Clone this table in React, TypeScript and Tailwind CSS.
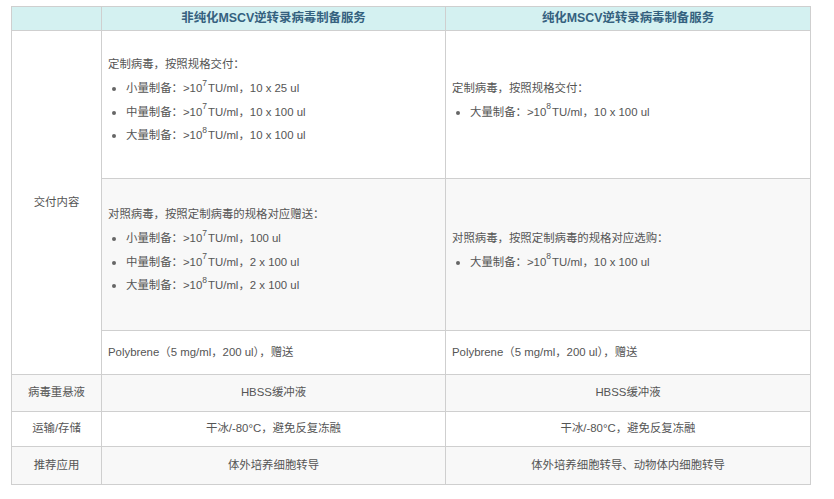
import React from 'react';

type Spec = { label: string; exp: string; spec: string };

const font = { fontFamily: '"Liberation Sans", "Noto Sans CJK SC", sans-serif' };

const SpecList: React.FC<{ title: string; items: Spec[] }> = ({ title, items }) => (
  <div className="pb-[9px]">
    <p className="leading-[24px] mb-[1px]">{title}</p>
    <ul>
      {items.map((it, i) => (
        <li key={i} className="flex items-center leading-[23.5px]">
          <span className="ml-[4px] mr-[10px] w-[4px] h-[4px] rounded-full bg-[#666] shrink-0"></span>
          <span>
            {it.label}：&gt;10<sup className="text-[8.5px] top-[-0.75em] pr-[1px]">{it.exp}</sup>TU/ml，{it.spec}
          </span>
        </li>
      ))}
    </ul>
  </div>
);

const App: React.FC = () => {
  const cell = 'border border-[#cfcfcf] align-middle';
  return (
    <div className="bg-white w-[834px] h-[499px] pt-[6px] pl-[11px]" style={font}>
      <table className="border-collapse table-fixed w-[799px] text-[11.4px] text-[#555]">
        <colgroup>
          <col className="w-[90px]" />
          <col className="w-[344px]" />
          <col className="w-[365px]" />
        </colgroup>
        <thead>
          <tr className="h-[24px] bg-[#d4f1f1]">
            <th className={cell}></th>
            <th className={`${cell} text-[12.4px] font-bold text-[#35617f] text-center`}>非纯化MSCV逆转录病毒制备服务</th>
            <th className={`${cell} text-[12.4px] font-bold text-[#35617f] text-center`}>纯化MSCV逆转录病毒制备服务</th>
          </tr>
        </thead>
        <tbody>
          <tr className="h-[148px] bg-white">
            <td rowSpan={3} className={`${cell} text-center bg-white`}>交付内容</td>
            <td className={`${cell} pl-[6px]`}>
              <SpecList
                title="定制病毒，按照规格交付："
                items={[
                  { label: '小量制备', exp: '7', spec: '10 x 25 ul' },
                  { label: '中量制备', exp: '7', spec: '10 x 100 ul' },
                  { label: '大量制备', exp: '8', spec: '10 x 100 ul' },
                ]}
              />
            </td>
            <td className={`${cell} pl-[6px]`}>
              <SpecList
                title="定制病毒，按照规格交付："
                items={[{ label: '大量制备', exp: '8', spec: '10 x 100 ul' }]}
              />
            </td>
          </tr>
          <tr className="h-[152px] bg-[#f8f8f8]">
            <td className={`${cell} pl-[6px]`}>
              <SpecList
                title="对照病毒，按照定制病毒的规格对应赠送："
                items={[
                  { label: '小量制备', exp: '7', spec: '100 ul' },
                  { label: '中量制备', exp: '7', spec: '2 x 100 ul' },
                  { label: '大量制备', exp: '8', spec: '2 x 100 ul' },
                ]}
              />
            </td>
            <td className={`${cell} pl-[6px]`}>
              <SpecList
                title="对照病毒，按照定制病毒的规格对应选购："
                items={[{ label: '大量制备', exp: '8', spec: '10 x 100 ul' }]}
              />
            </td>
          </tr>
          <tr className="h-[44px] bg-white">
            <td className={`${cell} pl-[6px]`}>Polybrene（5 mg/ml，200 ul），赠送</td>
            <td className={`${cell} pl-[6px]`}>Polybrene（5 mg/ml，200 ul），赠送</td>
          </tr>
          <tr className="h-[37px] bg-[#f8f8f8] text-center">
            <td className={cell}>病毒重悬液</td>
            <td className={cell}>HBSS缓冲液</td>
            <td className={cell}>HBSS缓冲液</td>
          </tr>
          <tr className="h-[35px] bg-white text-center">
            <td className={cell}>运输/存储</td>
            <td className={cell}>干冰/-80°C，避免反复冻融</td>
            <td className={cell}>干冰/-80°C，避免反复冻融</td>
          </tr>
          <tr className="h-[38px] bg-[#f8f8f8] text-center">
            <td className={cell}>推荐应用</td>
            <td className={cell}>体外培养细胞转导</td>
            <td className={cell}>体外培养细胞转导、动物体内细胞转导</td>
          </tr>
        </tbody>
      </table>
    </div>
  );
};

export default App;
